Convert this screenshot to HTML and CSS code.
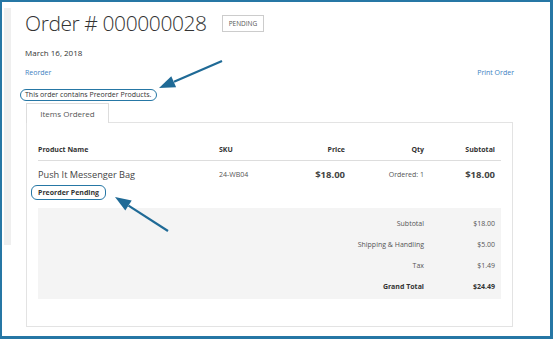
FILE: index.html
```html
<!DOCTYPE html>
<html lang="en">
<head>
    <meta charset="UTF-8">
    <meta name="viewport" content="width=device-width, initial-scale=1.0">
    <title>Order # 000000028</title>
    <link rel="stylesheet" href="styles.css">
</head>
<body>
    <div class="frame">
        <div class="rail"></div>
        <div class="main">
            <div class="title-row">
                <h1 class="title">Order # 000000028</h1>
                <span class="status">Pending</span>
            </div>
            <div class="date">March 16, 2018</div>
            <div class="actions">
                <a href="#">Reorder</a>
                <a href="#">Print Order</a>
            </div>
            <div class="note">This order contains Preorder Products.</div>

            <div class="tabs">
                <div class="tab">Items Ordered</div>
            </div>
            <div class="box">
                <!-- Items table -->
                <div class="grid head">
                    <div>Product Name</div>
                    <div>SKU</div>
                    <div class="num">Price</div>
                    <div class="num">Qty</div>
                    <div class="num">Subtotal</div>
                </div>
                <div class="grid item">
                    <div>
                        <div class="name">Push It Messenger Bag</div>
                        <span class="preorder">Preorder Pending</span>
                    </div>
                    <div class="small">24-WB04</div>
                    <div class="num price">$18.00</div>
                    <div class="num small">Ordered: 1</div>
                    <div class="num price">$18.00</div>
                </div>
                <!-- Totals -->
                <div class="totals">
                    <div class="total-row"><span>Subtotal</span><span>$18.00</span></div>
                    <div class="total-row"><span>Shipping &amp; Handling</span><span>$5.00</span></div>
                    <div class="total-row"><span>Tax</span><span>$1.49</span></div>
                    <div class="total-row grand"><span>Grand Total</span><span>$24.49</span></div>
                </div>
            </div>
        </div>

        <svg class="marks" width="553" height="339" viewBox="0 0 553 339">
            <line x1="222" y1="61" x2="174" y2="81.7" />
            <polygon points="159,88 176.1,87.2 171.3,76.2" />
            <line x1="168" y1="231" x2="128.5" y2="205.6" />
            <polygon points="115,197 131.7,200.6 125.3,210.6" />
        </svg>
    </div>
</body>
</html>
```

FILE: styles.css
```css
body {
    margin: 0;
    font-family: "Open Sans", "DejaVu Sans", sans-serif;
    color: #333;
    background: #fff;
}

.frame {
    position: relative;
    display: flex;
    width: 553px;
    height: 339px;
    box-sizing: border-box;
    border: solid #2677a5;
    border-width: 2px 3px 3px 2px;
    overflow: hidden;
}

.rail {
    flex: none;
    width: 7px;
    height: 237px;
    margin: 6px 0 0 2px;
    background: #efefef;
}

.main {
    flex: 1;
    padding: 6px 0 0 14px;
}

.title-row {
    display: flex;
    align-items: center;
    gap: 15px;
}

.title {
    margin: 0;
    font-size: 21px;
    font-weight: 300;
    letter-spacing: -0.02em;
    line-height: 30px;
}

.status {
    border: 1px solid #ccc;
    padding: 0 6px;
    font-size: 6.5px;
    line-height: 15px;
    text-transform: uppercase;
    color: #555;
}

.date {
    margin-top: 9px;
    font-size: 8px;
    line-height: 12px;
}

.actions {
    display: flex;
    justify-content: space-between;
    width: 489px;
    margin-top: 8px;
    font-size: 7px;
    line-height: 12px;
}

.actions a {
    color: #3d81c2;
    text-decoration: none;
}

.note {
    display: inline-block;
    margin: 10px 0 0 -5px;
    padding: 0 5px 0 4px;
    border: 1px solid #2677a5;
    border-radius: 6px;
    font-size: 7px;
    line-height: 10px;
}

.tabs {
    display: flex;
    margin: 1px 0 0 1px;
}

.tab {
    position: relative;
    z-index: 1;
    width: 81px;
    margin-bottom: -1px;
    border: 1px solid #ddd;
    border-bottom: none;
    background: #fff;
    text-align: center;
    font-size: 8px;
    line-height: 19px;
    color: #555;
}

.box {
    width: 487px;
    height: 205px;
    margin-left: 1px;
    padding: 0 11px;
    box-sizing: border-box;
    border: 1px solid #e3e3e3;
}

.grid {
    display: grid;
    grid-template-columns: 181px 61px 65px 79px 71px 6px;
}

.num {
    text-align: right;
}

.head {
    padding: 22px 0 5px;
    border-bottom: 1px solid #ddd;
    font-size: 7px;
    font-weight: 700;
    line-height: 10px;
}

.item {
    padding: 7px 0 8px;
    line-height: 14px;
}

.name {
    font-size: 9.2px;
    color: #444;
}

.small {
    font-size: 7px;
    color: #555;
}

.price {
    font-size: 9.5px;
    font-weight: 700;
    color: #444;
}

.preorder {
    display: inline-block;
    margin: 2px 0 0 -7px;
    padding: 0 6px;
    border: 1px solid #2677a5;
    border-radius: 6px;
    font-size: 7px;
    font-weight: 700;
    line-height: 13px;
}

.totals {
    padding: 5px 6px 2px 0;
    background: #f4f4f4;
    font-size: 7px;
    color: #555;
}

.total-row {
    display: grid;
    grid-template-columns: 1fr 71px;
    line-height: 21px;
    text-align: right;
}

.grand {
    font-weight: 700;
    color: #333;
}

.marks {
    position: absolute;
    top: -2px;
    left: -2px;
}

.marks line {
    stroke: #1f6a96;
    stroke-width: 2.2;
}

.marks polygon {
    fill: #1f6a96;
}
```
